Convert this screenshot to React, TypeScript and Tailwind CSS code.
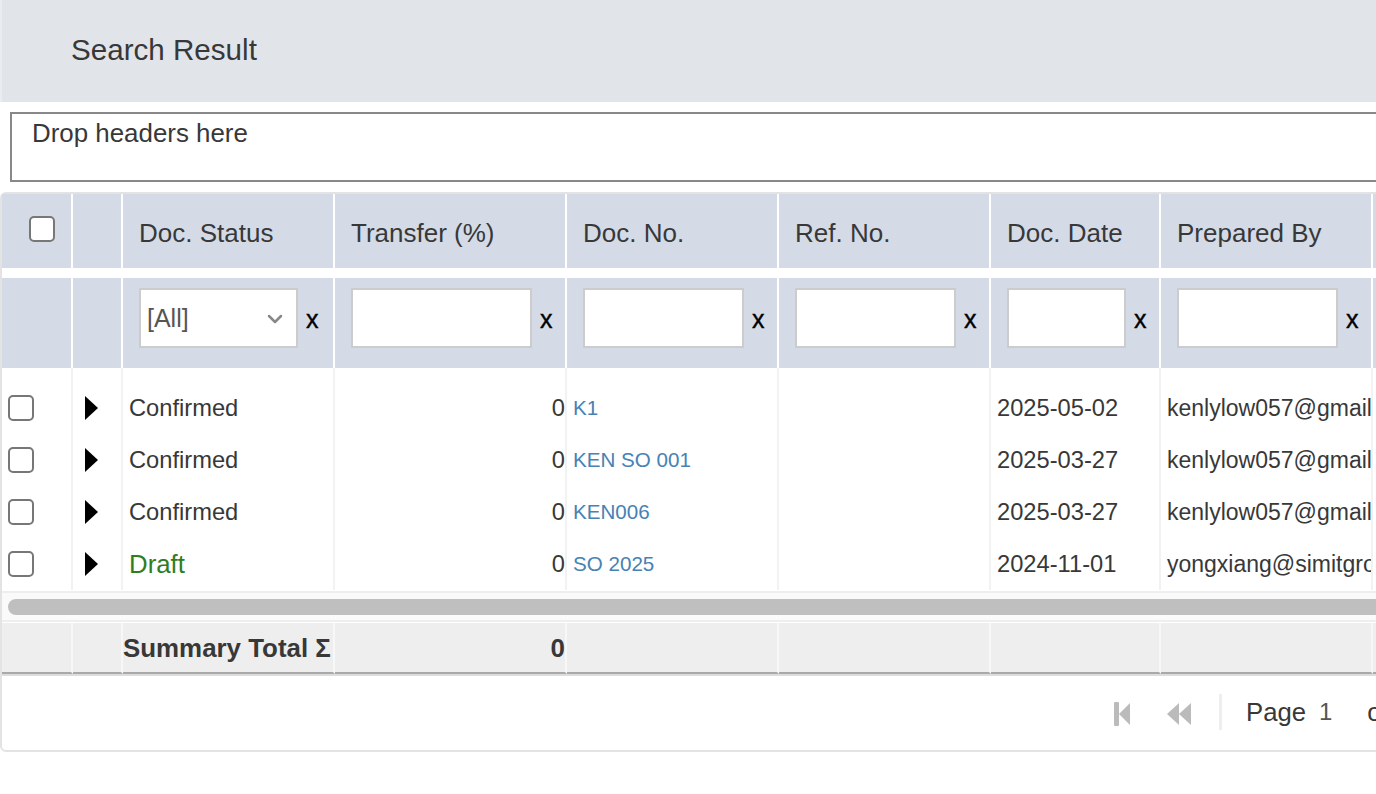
import { ChevronDown } from "lucide-react"

const columns = "grid grid-cols-[71px_50px_212px_232px_212px_212px_170px_212px_240px]"

const headers = ["Doc. Status", "Transfer (%)", "Doc. No.", "Ref. No.", "Doc. Date", "Prepared By"]

const filterWidths = ["w-[181px]", "w-[161px]", "w-[161px]", "w-[119px]", "w-[161px]"]

const rows = [
  { status: "Confirmed", no: "K1", date: "2025-05-02", by: "kenlylow057@gmail.com" },
  { status: "Confirmed", no: "KEN SO 001", date: "2025-03-27", by: "kenlylow057@gmail.com" },
  { status: "Confirmed", no: "KEN006", date: "2025-03-27", by: "kenlylow057@gmail.com" },
  { status: "Draft", no: "SO 2025", date: "2024-11-01", by: "yongxiang@simitgroup.com" },
]

function Checkbox() {
  return <div className="h-[26px] w-[26px] rounded-[5px] border-2 border-[#777777] bg-white" />
}

function ClearX() {
  return <span className="ml-[8px] mt-[3px] text-[25px] leading-none text-black [-webkit-text-stroke:0.4px_black]">x</span>
}

function BodyCell({ children, className = "" }: { children?: React.ReactNode; className?: string }) {
  return (
    <div className={"flex h-[52px] items-center overflow-hidden whitespace-nowrap border-r-2 border-[#f2f2f2] " + className}>
      {children}
    </div>
  )
}

export default function App() {
  return (
    <div className="h-[794px] w-[1376px] overflow-hidden bg-white font-['Liberation_Sans',Arial,sans-serif] text-[#383838]">

      {/* Title */}
      <div className="flex h-[102px] items-center border-l-2 border-[#e9ecf0] bg-[#e1e5ea] pb-[2px] pl-[69px] text-[29.6px]">
        Search Result
      </div>

      {/* Group panel */}
      <div className="ml-[10px] mt-[10px] h-[70px] w-[1500px] border-2 border-[#888888] pl-[20px] text-[25.9px] leading-[38px]">
        Drop headers here
      </div>

      {/* Grid */}
      <div className="mt-[10px] w-[1700px] rounded-[6px] border-2 border-[#e3e3e3] bg-white">

        {/* Header row */}
        <div className={columns + " h-[74px] text-[26px]"}>
          <div className="flex items-center border-r-2 border-white bg-[#d4dbe7] pb-[4px] pl-[27px]">
            <Checkbox />
          </div>
          <div className="border-r-2 border-white bg-[#d4dbe7]" />
          {headers.map((h) => (
            <div key={h} className="flex items-center border-r-2 border-white bg-[#d4dbe7] pl-[16px] pt-[4px]">{h}</div>
          ))}
          <div className="bg-[#d4dbe7]" />
        </div>

        {/* Filter row */}
        <div className={columns + " mt-[10px] h-[90px]"}>
          <div className="border-r-2 border-white bg-[#d4dbe7]" />
          <div className="border-r-2 border-white bg-[#d4dbe7]" />
          <div className="flex items-center border-r-2 border-white bg-[#d4dbe7] pb-[10px] pl-[16px]">
            <div className="flex h-[60px] w-[159px] items-center justify-between border-2 border-[#cccccc] bg-white pl-[6px] pr-[9px] pt-px text-[25px] text-[#555555]">
              [All]
              <ChevronDown size={24} strokeWidth={2.5} className="text-[#888888]" />
            </div>
            <ClearX />
          </div>
          {filterWidths.map((w, i) => (
            <div key={i} className="flex items-center border-r-2 border-white bg-[#d4dbe7] pb-[10px] pl-[16px]">
              <div className={"h-[60px] border-2 border-[#cccccc] bg-white " + w} />
              <ClearX />
            </div>
          ))}
          <div className="bg-[#d4dbe7]" />
        </div>

        {/* Body */}
        <div className={columns + " pb-px text-[23.7px]"}>
          {Array.from({ length: 9 }).map((_, i) => (
            <div key={i} className="h-[14px] border-r-2 border-[#f2f2f2]" />
          ))}
          {rows.map((r) => (
            <div key={r.no} className="contents">
              <BodyCell className="pl-[6px]"><Checkbox /></BodyCell>
              <BodyCell className="pl-[12px]">
                <svg width="13" height="24" viewBox="0 0 13 24" className="fill-black"><path d="M0 0L13 12L0 24Z" /></svg>
              </BodyCell>
              <BodyCell className={"pl-[6px] " + (r.status === "Draft" ? "text-[25.8px] text-[#2f7d1f]" : "pt-[2px]")}>{r.status}</BodyCell>
              <BodyCell className="justify-end pt-[2px]">0</BodyCell>
              <BodyCell className="pl-[6px] text-[20.6px] text-[#4682b4]">{r.no}</BodyCell>
              <BodyCell />
              <BodyCell className="pl-[6px] pt-[2px]">{r.date}</BodyCell>
              <BodyCell className="pl-[6px] text-[23px]">{r.by}</BodyCell>
              <BodyCell />
            </div>
          ))}
        </div>

        {/* Scrollbar */}
        <div className="h-[31px] border-y-2 border-[#eeeeee] bg-[#fafafa] px-[6px] pt-[6px]">
          <div className="h-[16px] rounded-full bg-[#bfbfbf]" />
        </div>

        {/* Summary */}
        <div className={columns + " mt-px h-[53px] border-b-2 border-[#dddddd] font-bold text-[25.9px]"}>
          {Array.from({ length: 9 }).map((_, i) => (
            <div
              key={i}
              className={"flex items-center overflow-hidden whitespace-nowrap border-b-2 border-r-2 border-b-[#a9a9a9] border-r-[#f7f7f7] bg-[#eeeeee] pt-[2px] " + (i === 3 ? "justify-end" : "")}
            >
              {i === 2 && "Summary Total Σ"}
              {i === 3 && "0"}
            </div>
          ))}
        </div>

        {/* Pager */}
        <div className="flex h-[74px] items-center pb-[2px] pl-[1112px] text-[25.7px]">
          <svg width="18" height="24" viewBox="0 0 18 24" className="mt-[3px] fill-[#bbbbbb]">
            <path d="M0 1a1 1 0 0 1 1-1h3a1 1 0 0 1 1 1v22a1 1 0 0 1-1 1H1a1 1 0 0 1-1-1Z" />
            <path d="M5 12L16 1V23Z" />
          </svg>
          <svg width="24" height="24" viewBox="0 0 24 24" className="ml-[35px] mt-[3px] fill-[#bbbbbb]">
            <path d="M0 12L12 1V23Z" />
            <path d="M12 12L24 1V23Z" />
          </svg>
          <div className="ml-[28px] h-[36px] w-[3px] bg-[#eeeeee]" />
          <span className="ml-[24px]">Page</span>
          <span className="ml-[13px] text-[#555555] text-[24px]">1</span>
          <span className="ml-[35px]">of 1</span>
        </div>
      </div>
    </div>
  )
}
